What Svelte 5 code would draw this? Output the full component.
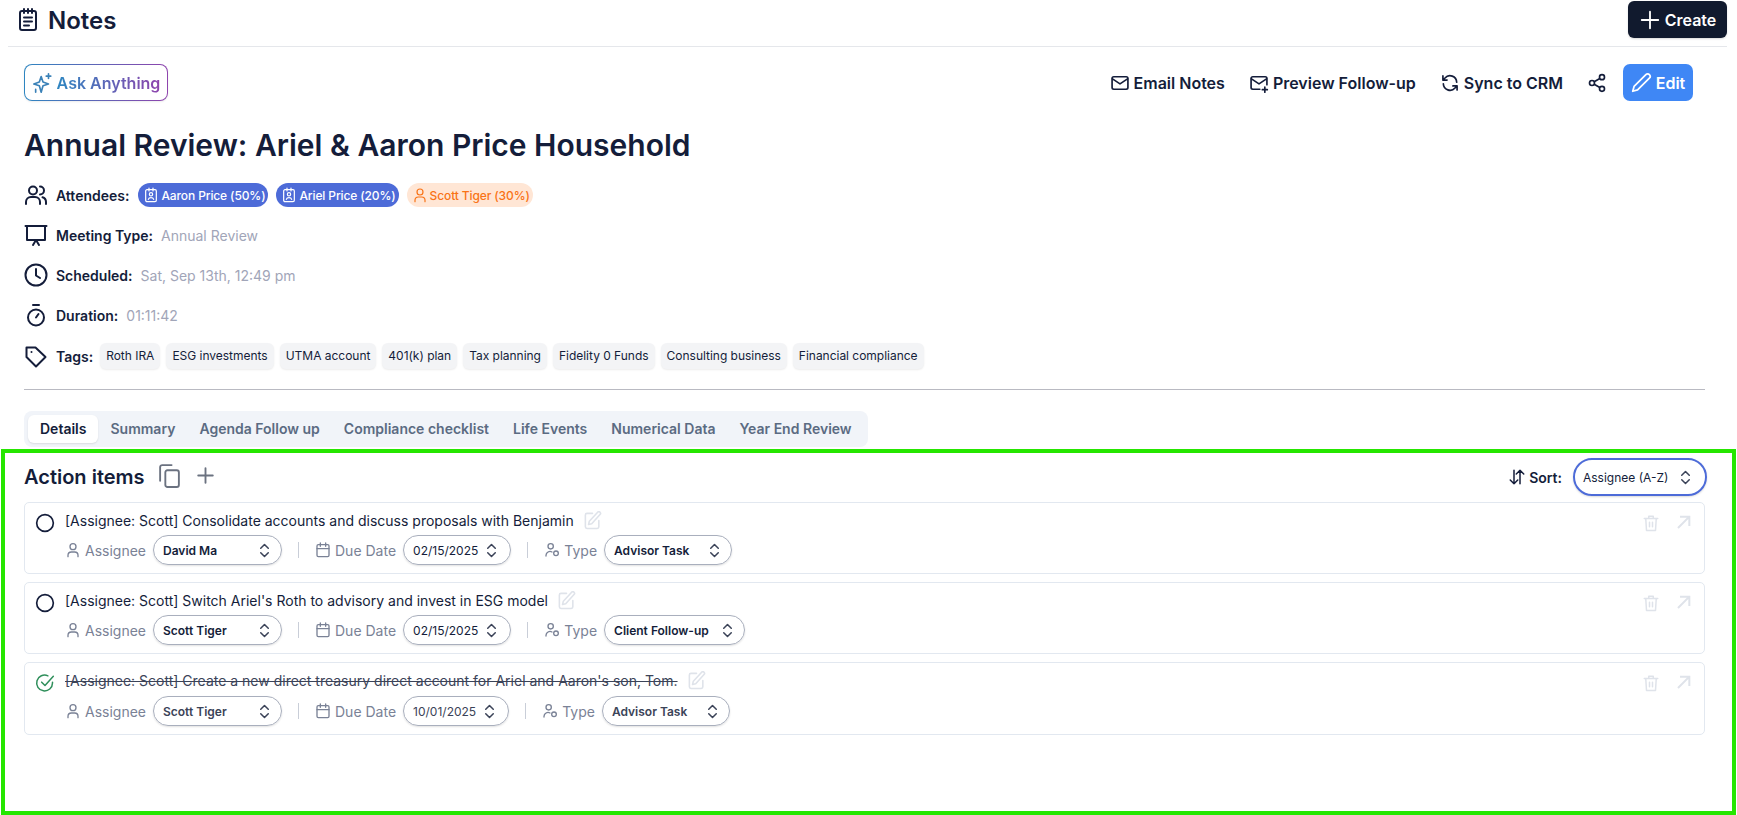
<script>
	const attendees = [
		{ name: 'Aaron Price (50%)', client: true },
		{ name: 'Ariel Price (20%)', client: true },
		{ name: 'Scott Tiger (30%)', client: false }
	];
	const tags = ['Roth IRA', 'ESG investments', 'UTMA account', '401(k) plan', 'Tax planning', 'Fidelity 0 Funds', 'Consulting business', 'Financial compliance'];
	const tabs = ['Details', 'Summary', 'Agenda Follow up', 'Compliance checklist', 'Life Events', 'Numerical Data', 'Year End Review'];
	const items = [
		{ title: '[Assignee: Scott] Consolidate accounts and discuss proposals with Benjamin', assignee: 'David Ma', date: '02/15/2025', type: 'Advisor Task', done: false },
		{ title: "[Assignee: Scott] Switch Ariel's Roth to advisory and invest in ESG model", assignee: 'Scott Tiger', date: '02/15/2025', type: 'Client Follow-up', done: false },
		{ title: "[Assignee: Scott] Create a new direct treasury direct account for Ariel and Aaron's son, Tom.", assignee: 'Scott Tiger', date: '10/01/2025', type: 'Advisor Task', done: true }
	];
</script>

{#snippet chevrons()}
	<svg class="chev" viewBox="6 2 12 20" fill="none" stroke="currentColor" stroke-width="2" stroke-linecap="round" stroke-linejoin="round"><path d="M7 9l5-5 5 5M7 15l5 5 5-5" /></svg>
{/snippet}

<div class="page">
	<header class="topbar">
		<div class="brand">
			<svg class="notes-ico" viewBox="0 0 24 24" fill="none" stroke="currentColor" stroke-width="2" stroke-linecap="round" stroke-linejoin="round"><rect x="4" y="3.500" width="16" height="19" rx="2" /><path d="M8 1.500v4M12 1.500v4M16 1.500v4M8 10h8M8 14h8M8 18h5" /></svg>
			<h1>Notes</h1>
		</div>
		<button class="create">
			<svg viewBox="0 0 24 24" fill="none" stroke="currentColor" stroke-width="2" stroke-linecap="round"><path d="M12 3v18M3 12h18" /></svg>
			Create
		</button>
	</header>

	<div class="toolbar">
		<button class="ask">
			<svg viewBox="0 0 24 24" fill="none" stroke="#3b82b8" stroke-width="1.800" stroke-linejoin="round" stroke-linecap="round"><path d="M10 5l2 6 6 2-6 2-2 7-2-7-6-2 6-2z" /><path d="M18 2v5M15.500 4.500h5M4 19v3" /></svg>
			<span>Ask Anything</span>
		</button>
		<div class="actions">
			<button class="link">
				<svg viewBox="0 0 24 24" fill="none" stroke="currentColor" stroke-width="2" stroke-linejoin="round" stroke-linecap="round"><rect x="2.500" y="4.500" width="19" height="15" rx="2" /><path d="M3 7l9 6 9-6" /></svg>
				Email Notes
			</button>
			<button class="link">
				<svg viewBox="0 0 24 24" fill="none" stroke="currentColor" stroke-width="2" stroke-linejoin="round" stroke-linecap="round"><path d="M13 19.500H4.500a2 2 0 0 1-2-2v-11a2 2 0 0 1 2-2h15a2 2 0 0 1 2 2V14" /><path d="M3 7l9 6 9-6M19 17v6M16 20h6" /></svg>
				Preview Follow-up
			</button>
			<button class="link">
				<svg viewBox="0 0 24 24" fill="none" stroke="currentColor" stroke-width="2" stroke-linejoin="round" stroke-linecap="round"><path d="M20 11a8 8 0 0 0-14-5L3.500 8.500M3.500 3.500v5h5M4 13a8 8 0 0 0 14 5l2.500-2.500M20.500 20.500v-5h-5" /></svg>
				Sync to CRM
			</button>
			<button class="link share" aria-label="Share">
				<svg viewBox="0 0 24 24" fill="none" stroke="currentColor" stroke-width="2"><circle cx="18" cy="5" r="3" /><circle cx="6" cy="12" r="3" /><circle cx="18" cy="19" r="3" /><path d="M8.600 10.500l6.800-4M8.600 13.500l6.800 4" /></svg>
			</button>
			<button class="edit">
				<svg viewBox="0 0 24 24" fill="none" stroke="currentColor" stroke-width="2" stroke-linejoin="round" stroke-linecap="round"><path d="M17 3a2.800 2.800 0 0 1 4 4L7.500 20.500 2 22l1.500-5.500z" /></svg>
				Edit
			</button>
		</div>
	</div>

	<h2 class="title">Annual Review: Ariel &amp; Aaron Price Household</h2>

	<div class="meta">
		<div class="row people">
			<svg class="mico" viewBox="0 0 24 24" fill="none" stroke="currentColor" stroke-width="2" stroke-linecap="round"><circle cx="9" cy="7.500" r="4" /><path d="M2 21v-2a5 5 0 0 1 5-5h4a5 5 0 0 1 5 5v2M16 3.500a4 4 0 0 1 0 8M22 21v-2a5 5 0 0 0-3.500-4.800" /></svg>
			<b>Attendees:</b>
			<div class="chips">
				{#each attendees as a}
					<span class="person" class:client={a.client}>
						{#if a.client}
							<svg viewBox="0 0 24 24" fill="none" stroke="currentColor" stroke-width="1.800" stroke-linecap="round"><rect x="4" y="4" width="16" height="18" rx="2" /><path d="M9 1.500V6M15 1.500V6" /><circle cx="12" cy="11" r="2.500" /><path d="M8 18.500c.6-2 2-2.500 4-2.500s3.400.5 4 2.500" /></svg>
						{:else}
							<svg viewBox="0 0 24 24" fill="none" stroke="currentColor" stroke-width="1.800" stroke-linecap="round"><circle cx="12" cy="7.500" r="4.500" /><path d="M4.500 22v-2a5 5 0 0 1 5-5h5a5 5 0 0 1 5 5v2" /></svg>
						{/if}
						{a.name}
					</span>
				{/each}
			</div>
		</div>
		<div class="row">
			<svg class="mico" viewBox="0 0 24 24" fill="none" stroke="currentColor" stroke-width="2" stroke-linecap="round" stroke-linejoin="round"><path d="M1.500 3h21M3 3v14h18V3M9 22l3-5 3 5" /></svg>
			<b>Meeting Type:</b><span class="val">Annual Review</span>
		</div>
		<div class="row">
			<svg class="mico" viewBox="0 0 24 24" fill="none" stroke="currentColor" stroke-width="2" stroke-linecap="round" stroke-linejoin="round"><circle cx="12" cy="12" r="10.500" /><path d="M12 6v6.500l4 2.500" /></svg>
			<b>Scheduled:</b><span class="val">Sat, Sep 13th, 12:49 pm</span>
		</div>
		<div class="row">
			<svg class="mico" viewBox="0 0 24 24" fill="none" stroke="currentColor" stroke-width="2" stroke-linecap="round"><circle cx="12" cy="14.500" r="8" /><path d="M9 2h6M12 14.500l2.500-3.500" /></svg>
			<b>Duration:</b><span class="val">01:11:42</span>
		</div>
		<div class="row tag-row">
			<svg class="mico" viewBox="0 0 24 24" fill="none" stroke="currentColor" stroke-width="2" stroke-linejoin="round" stroke-linecap="round"><path d="M2.500 3.500h9l10 9.500-9.500 9.500-9.500-9.500z" /><path d="M7.500 8h.01" /></svg>
			<b>Tags:</b>
			<div class="chips tags">
				{#each tags as t}<span class="tag">{t}</span>{/each}
			</div>
		</div>
	</div>

	<hr />

	<nav class="tabs">
		{#each tabs as t, i}<span class="tab" class:on={i === 0}>{t}</span>{/each}
	</nav>

	<section class="section">
		<div class="section-head">
			<h3>Action items</h3>
			<svg class="tool" viewBox="0 0 24 24" fill="none" stroke="currentColor" stroke-width="1.800" stroke-linejoin="round" stroke-linecap="round"><rect x="8" y="7" width="13" height="16" rx="2" /><path d="M3 17V4a2 2 0 0 1 2-2h9" /></svg>
			<svg class="tool" viewBox="0 0 24 24" fill="none" stroke="currentColor" stroke-width="1.800" stroke-linecap="round"><path d="M12 5v14M5 12h14" /></svg>
			<div class="sort">
				<svg viewBox="0 0 24 24" fill="none" stroke="currentColor" stroke-width="2" stroke-linecap="round" stroke-linejoin="round"><path d="M8 3v18M3 16l5 5 5-5M16 21V3M11 8l5-5 5 5" /></svg>
				<b>Sort:</b>
				<div class="sort-select">Assignee (A-Z){@render chevrons()}</div>
			</div>
		</div>

		<div class="list">
			{#each items as item}
				<article class="card" class:done={item.done}>
					<div class="check">
						{#if item.done}
							<svg viewBox="0 0 24 24" fill="none" stroke="#2f8f5b" stroke-width="1.800" stroke-linecap="round" stroke-linejoin="round"><path d="M21 11v1a9.500 9.500 0 1 1-5.500-8.600" /><path d="M8 11l4 4 10-11" /></svg>
						{:else}
							<svg viewBox="0 0 24 24" fill="none" stroke="#141d3a" stroke-width="2"><circle cx="12" cy="12" r="10" /></svg>
						{/if}
					</div>
					<div class="body">
						<div class="line">
							<span class="text">{item.title}</span>
							<svg class="pen" viewBox="0 0 24 24" fill="none" stroke="currentColor" stroke-width="2" stroke-linecap="round" stroke-linejoin="round"><path d="M12 3H5a2 2 0 0 0-2 2v15a2 2 0 0 0 2 2h13a2 2 0 0 0 2-2v-8" /><path d="M18.500 1.500a2 2 0 0 1 3 3L11 16l-4 1 1-4z" /></svg>
						</div>
						<div class="fields">
							<span class="fld">
								<svg viewBox="0 0 24 24" fill="none" stroke="currentColor" stroke-width="2" stroke-linecap="round"><circle cx="12" cy="7" r="4.500" /><path d="M4.500 22v-2a5 5 0 0 1 5-5h5a5 5 0 0 1 5 5v2" /></svg>
								Assignee
							</span>
							<div class="pick assignee"><b>{item.assignee}</b>{@render chevrons()}</div>
							<i class="sep"></i>
							<span class="fld">
								<svg viewBox="0 0 24 24" fill="none" stroke="currentColor" stroke-width="2" stroke-linecap="round"><rect x="3" y="4" width="18" height="18" rx="2" /><path d="M8 1.500v5M16 1.500v5M3 10h18" /></svg>
								Due Date
							</span>
							<div class="pick date">{item.date}{@render chevrons()}</div>
							<i class="sep"></i>
							<span class="fld">
								<svg viewBox="0 0 24 24" fill="none" stroke="currentColor" stroke-width="2" stroke-linecap="round"><circle cx="10" cy="6.500" r="4" /><path d="M3 21v-1a6 6 0 0 1 9-5" /><circle cx="18" cy="17" r="3.500" /></svg>
								Type
							</span>
							<div class="pick kind"><b>{item.type}</b>{@render chevrons()}</div>
						</div>
					</div>
					<div class="tools">
						<svg class="trash" viewBox="0 0 24 24" fill="none" stroke="currentColor" stroke-width="2" stroke-linecap="round" stroke-linejoin="round"><path d="M3 6h18M9 6V3h6v3M5 6l1 16h12l1-16M10 11v6M14 11v6" /></svg>
						<svg viewBox="0 0 24 24" fill="none" stroke="currentColor" stroke-width="3"><path d="M3 21L20 4M6 4h14v14" /></svg>
					</div>
				</article>
			{/each}
		</div>
	</section>

	<div class="highlight"></div>
</div>

<style>
	:global(body) {
		margin: 0;
		background: #fff;
		font-family: Inter, "Liberation Sans", sans-serif;
		color: #141d3a;
	}

	.page {
		position: relative;
		width: 1737px;
		height: 815px;
		overflow: hidden;
		padding: 0 32px 0 24px;
		box-sizing: border-box;
	}

	button {
		font-family: inherit;
		border: 0;
		background: none;
		cursor: pointer;
		color: inherit;
		display: inline-flex;
		align-items: center;
		padding: 0;
	}

	.topbar {
		margin: 0 -22px 0 -16px;
		height: 47px;
		box-sizing: border-box;
		border-bottom: 1px solid #e5e7eb;
		display: flex;
		justify-content: space-between;
		align-items: flex-start;
		padding: 1px 0 0 8px;
	}

	.brand {
		display: flex;
		align-items: center;
		gap: 8px;
		height: 38px;
	}

	.notes-ico {
		width: 24px;
		height: 27px;
		margin-top: -1px;
	}

	h1 {
		font-size: 24px;
		font-weight: 600;
		margin: 0;
	}

	.create {
		background: #111a2e;
		color: #fff;
		height: 37px;
		width: 99px;
		border-radius: 6px;
		font-size: 16px;
		font-weight: 600;
		gap: 4px;
		justify-content: center;
		box-shadow: 0 1px 2px rgba(0, 0, 0, .15);
	}

	.create svg {
		width: 22px;
		height: 22px;
	}

	.toolbar {
		display: flex;
		justify-content: space-between;
		align-items: center;
		margin-top: 17px;
		height: 37px;
		padding-right: 12px;
	}

	.ask {
		height: 37px;
		width: 144px;
		box-sizing: border-box;
		justify-content: center;
		gap: 3px;
		border-radius: 8px;
		border: 1px solid transparent;
		background: linear-gradient(#fff, #fff) padding-box, linear-gradient(90deg, #2e86c1, #8e44ad) border-box;
		font-size: 16px;
		font-weight: 600;
		box-shadow: 0 1px 2px rgba(0, 0, 0, .08);
	}

	.ask svg {
		width: 22px;
		height: 22px;
	}

	.ask span {
		background: linear-gradient(90deg, #2e86c1, #8e44ad);
		-webkit-background-clip: text;
		background-clip: text;
		color: transparent;
	}

	.actions {
		display: flex;
		align-items: center;
		gap: 24px;
	}

	.link {
		font-size: 16px;
		font-weight: 600;
		gap: 4px;
	}

	.link svg {
		width: 20px;
		height: 20px;
	}

	.edit {
		margin-left: -8px;
		background: #3f87f5;
		color: #fff;
		height: 37px;
		width: 70px;
		justify-content: center;
		gap: 4px;
		border-radius: 7px;
		font-size: 16px;
		font-weight: 600;
	}

	.edit svg {
		width: 21px;
		height: 21px;
	}

	.title {
		font-size: 30px;
		font-weight: 600;
		line-height: 36px;
		margin: 26px 0 0;
	}

	.meta {
		margin-top: 12px;
	}

	.row {
		height: 40px;
		display: flex;
		align-items: center;
		font-size: 14px;
	}

	.tag-row {
		margin-top: 1px;
	}

	.mico {
		width: 24px;
		height: 24px;
		margin: 0 8px 0 0;
		flex: none;
	}

	.row b {
		font-weight: 600;
		margin-right: 8px;
	}

	.people b {
		margin-right: 9px;
	}

	.val {
		color: #a1a5b8;
	}

	.chips {
		display: flex;
		gap: 8px;
	}

	.tags {
		gap: 6px;
		letter-spacing: -0.02px;
		margin-left: -1px;
	}

	.person {
		display: inline-flex;
		align-items: center;
		gap: 2px;
		height: 24px;
		padding: 0 3px 0 5px;
		border-radius: 12px;
		font-size: 12px;
		font-weight: 500;
		letter-spacing: -0.12px;
		background: #ffe6d5;
		color: #f97316;
	}

	.person.client {
		background: #4d6bd8;
		color: #fff;
	}

	.person svg {
		width: 16px;
		height: 16px;
	}

	.tag {
		height: 26px;
		line-height: 26px;
		padding: 0 6px;
		border-radius: 6px;
		background: #f3f4f6;
		font-size: 12px;
		box-shadow: 0 1px 2px rgba(0, 0, 0, .08);
	}

	hr {
		margin: 13px 0 0;
		border: 0;
		border-top: 1px solid #b9bac2;
	}

	.tabs {
		margin-top: 21px;
		display: inline-flex;
		background: #f1f4f9;
		border-radius: 8px;
		padding: 4px;
		gap: 0;
		height: 28px;
	}

	.tab {
		padding: 0 12px;
		font-size: 14px;
		font-weight: 600;
		line-height: 28px;
		color: #5b6b82;
		border-radius: 6px;
	}

	.tab.on {
		background: #fff;
		color: #141d3a;
		box-shadow: 0 1px 2px rgba(0, 0, 0, .1);
	}

	.section-head {
		display: flex;
		align-items: center;
		height: 36px;
		margin-top: 12px;
		color: #6b7280;
	}

	h3 {
		margin: 0 12px 0 0;
		font-size: 20px;
		font-weight: 600;
		color: #141d3a;
	}

	.tool {
		width: 25px;
		height: 25px;
		margin: -3px 11px 0 0;
	}

	.sort {
		margin-left: auto;
		margin-right: -2px;
		display: flex;
		align-items: center;
		gap: 3px;
		color: #141d3a;
		font-size: 14px;
	}

	.sort > svg {
		width: 18px;
		height: 18px;
	}

	.sort b {
		font-weight: 600;
		margin-right: 8px;
	}

	.sort-select {
		display: flex;
		align-items: center;
		justify-content: space-between;
		box-sizing: border-box;
		width: 134px;
		height: 38px;
		padding: 0 15px 0 8px;
		border: 2px solid #4d6bd8;
		border-radius: 19px;
		font-size: 12px;
		box-shadow: 0 1px 2px rgba(0, 0, 0, .15);
	}

	.list {
		margin-top: 7px;
		display: flex;
		flex-direction: column;
		gap: 8px;
	}

	.card {
		display: flex;
		box-sizing: border-box;
		height: 72px;
		border: 1px solid #e2e8f0;
		border-radius: 5px;
		padding: 7px 0 0 10px;
	}

	.card.done {
		height: 73px;
	}

	.check {
		width: 20px;
		height: 20px;
		margin-top: 3px;
		margin-right: 10px;
	}

	.check svg {
		display: block;
		width: 20px;
		height: 20px;
	}

	.body {
		flex: 1;
	}

	.line {
		display: flex;
		align-items: center;
		gap: 9px;
		font-size: 14px;
		height: 20px;
	}

	.pen {
		width: 19px;
		height: 19px;
		color: #dfe3ea;
	}

	.done .text {
		text-decoration: line-through;
		color: #3b4358;
	}

	.fields {
		display: flex;
		align-items: center;
		margin-top: 5px;
		height: 30px;
		color: #7a8296;
		font-size: 14px;
	}

	.done .fields {
		margin-top: 6px;
	}

	.fld {
		display: inline-flex;
		align-items: center;
		gap: 4px;
		margin-right: 7px;
	}

	.fld svg {
		width: 16px;
		height: 16px;
	}

	.pick {
		display: flex;
		align-items: center;
		justify-content: space-between;
		gap: 9px;
		box-sizing: border-box;
		height: 30px;
		padding: 0 12px 0 9px;
		border: 1px solid #a9afbd;
		border-radius: 15px;
		font-size: 12px;
		color: #141d3a;
		box-shadow: 0 1px 2px rgba(0, 0, 0, .12);
	}

	.pick b {
		font-weight: 600;
	}

	.assignee {
		width: 129px;
	}

	.date {
		padding-right: 14px;
	}

	.kind {
		min-width: 128px;
		gap: 14px;
	}

	.done .pick {
		color: #3b4358;
	}

	.chev {
		width: 9px;
		height: 15px;
		flex: none;
		color: #3b4358;
	}

	.sep {
		width: 1px;
		height: 16px;
		background: #c9ced8;
		margin: 0 16px 0 16px;
	}

	.tools {
		display: flex;
		gap: 16px;
		padding: 4px 12px 0 0;
		color: #dfe3ea;
	}

	.tools svg {
		width: 16px;
		height: 16px;
	}

	.tools .trash {
		width: 18px;
		height: 18px;
	}

	.highlight {
		position: absolute;
		left: 1px;
		top: 449px;
		width: 1735px;
		height: 366px;
		box-sizing: border-box;
		border: 4px solid #26e600;
		pointer-events: none;
	}
</style>
